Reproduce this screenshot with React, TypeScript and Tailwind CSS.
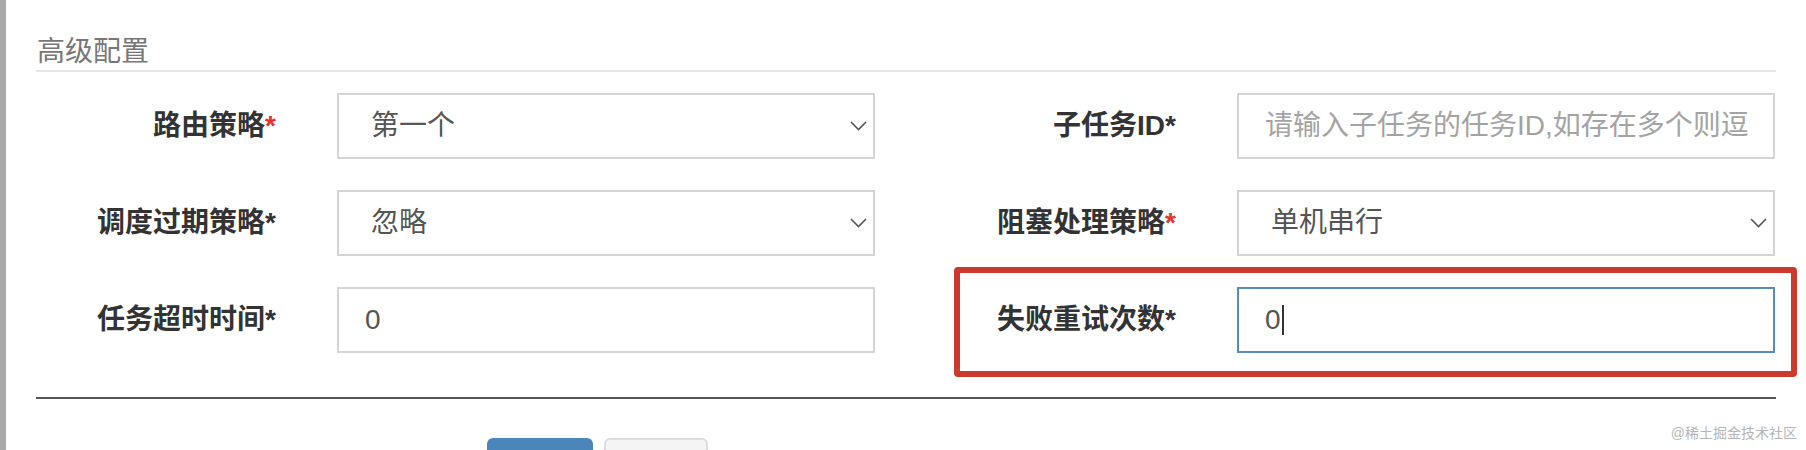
const font = { fontFamily: '"Liberation Sans", "Noto Sans CJK SC", sans-serif' }

const Chevron: React.FC = () => (
  <svg width="17" height="10" viewBox="0 0 17 10" fill="none">
    <polyline points="1,1 8.5,8.5 16,1" stroke="#555" strokeWidth="1.6" />
  </svg>
)

const Label: React.FC<{ text: string; red?: boolean }> = ({ text, red }) => (
  <div className="w-[240px] shrink-0 text-right text-[28px] leading-[34px] font-bold text-[#333]">
    {text}
    <span className={red ? "text-[#e0352b]" : "text-[#333]"}>*</span>
  </div>
)

const Select: React.FC<{ value: string }> = ({ value }) => (
  <div className="flex h-[66px] w-[538px] shrink-0 items-center justify-between border-2 border-[#d4d4d4] bg-white pl-[32px] pr-[6px]">
    <span className="text-[28px] text-[#555]">{value}</span>
    <Chevron />
  </div>
)

const Input: React.FC<{ value?: string; placeholder?: string; focused?: boolean }> = ({
  value,
  placeholder,
  focused,
}) => (
  <div
    className={
      focused
        ? "flex h-[66px] w-[538px] shrink-0 items-center border-2 border-[#5b8cb6] bg-white pl-[26px] pr-[23px]"
        : "flex h-[66px] w-[538px] shrink-0 items-center border-2 border-[#d4d4d4] bg-white pl-[26px] pr-[23px]"
    }
  >
    {value ? (
      <span className="flex items-center text-[28px] text-[#555]">
        {value}
        {focused && <span className="ml-[1px] h-[30px] w-[2px] bg-[#333]" />}
      </span>
    ) : (
      <div className="min-w-0 flex-1 overflow-hidden">
        <span className="whitespace-nowrap text-[28px] text-[#a3a3a3]">{placeholder}</span>
      </div>
    )}
  </div>
)

const Field: React.FC<{ children: React.ReactNode }> = ({ children }) => (
  <div className="flex items-center gap-[61px]">{children}</div>
)

export default function App() {
  return (
    <div className="relative flex h-[450px] w-[1806px] overflow-hidden bg-white" style={font}>
      <div className="w-[6px] shrink-0 bg-[#a9a9a9]" />
      <div className="flex flex-col pl-[30px] pt-[36px]">
        <div className="w-[1740px] shrink-0 border-b-2 border-[#e5e5e5] pb-[2px] pl-[1px] text-[28px] leading-[32px] text-[#777]">
          高级配置
        </div>

        <div className="mt-[21px] flex shrink-0 flex-col gap-[31px]">
          <div className="flex gap-[61px]">
            <Field>
              <Label text="路由策略" red />
              <Select value="第一个" />
            </Field>
            <Field>
              <Label text="子任务ID" />
              <Input placeholder="请输入子任务的任务ID,如存在多个则逗号分隔" />
            </Field>
          </div>
          <div className="flex gap-[61px]">
            <Field>
              <Label text="调度过期策略" />
              <Select value="忽略" />
            </Field>
            <Field>
              <Label text="阻塞处理策略" red />
              <Select value="单机串行" />
            </Field>
          </div>
          <div className="flex gap-[61px]">
            <Field>
              <Label text="任务超时时间" />
              <Input value="0" />
            </Field>
            <div className="relative">
              <Field>
                <Label text="失败重试次数" />
                <Input value="0" focused />
              </Field>
              <div className="pointer-events-none absolute bottom-[-24px] left-[18px] right-[-22px] top-[-20px] rounded-[4px] border-[6px] border-[#cb3a2c]" />
            </div>
          </div>
        </div>

        <div className="mt-[44px] h-[2px] w-[1740px] shrink-0 bg-[#555]" />

        <div className="mt-[39px] flex shrink-0 gap-[11px] pl-[451px]">
          <div className="h-[50px] w-[106px] rounded-[6px] bg-[#4a86b9]" />
          <div className="h-[50px] w-[104px] rounded-[6px] border-2 border-[#ddd] bg-[#f4f4f4]" />
        </div>
      </div>

      <div className="absolute right-[9px] top-[423px] text-[14px] text-[#b5b5b5]">@稀土掘金技术社区</div>
    </div>
  )
}
